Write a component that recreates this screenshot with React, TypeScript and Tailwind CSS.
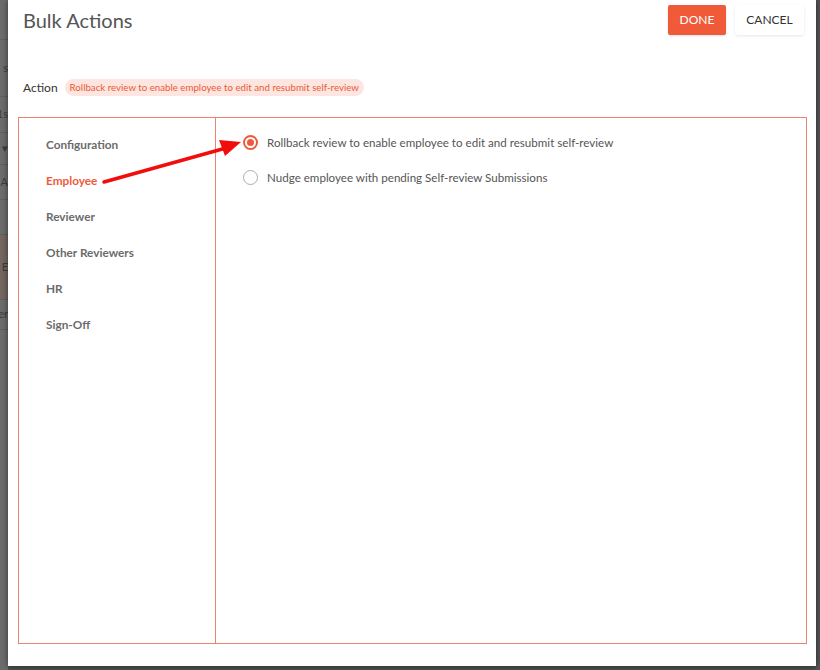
import { useState } from "react";

const NAV = ["Configuration", "Employee", "Reviewer", "Other Reviewers", "HR", "Sign-Off"];

const OPTIONS = [
  "Rollback review to enable employee to edit and resubmit self-review",
  "Nudge employee with pending Self-review Submissions",
];

// bits of the page peeking out behind the modal on the left
const BEHIND = [
  { h: 40, t: "" },
  { h: 57, t: "s" },
  { h: 36, t: "1s" },
  { h: 32, t: "▾" },
  { h: 35, t: "t A" },
  { h: 35, t: "" },
  { h: 65, t: "E", dark: true },
  { h: 30, t: "er" },
];

function Radio({ checked }: { checked: boolean }) {
  return checked ? (
    <span className="flex h-[15px] w-[15px] shrink-0 items-center justify-center rounded-full border-2 border-[#ef5a3a]">
      <span className="h-[7px] w-[7px] rounded-full bg-[#ef5a3a]" />
    </span>
  ) : (
    <span className="h-[15px] w-[15px] shrink-0 rounded-full border-[1.5px] border-[#a9adb1]" />
  );
}

export default function App() {
  const [active] = useState("Employee");
  const [selected, setSelected] = useState(0);

  return (
    <div className="relative flex h-[670px] w-[820px] overflow-hidden bg-[#4f4f4f] font-['Lato','Noto_Sans',sans-serif]">
      <div className="flex w-[8px] shrink-0 flex-col overflow-hidden bg-[#6c6c6c] text-[11px] text-[#3c3c3c]">
        {BEHIND.map((b, i) => (
          <div
            key={i}
            style={{ height: b.h }}
            className={`flex shrink-0 items-center justify-end whitespace-nowrap border-b border-[#5f5f5f] ${b.dark ? "bg-[#75675f]" : ""}`}
          >
            {b.t}
          </div>
        ))}
      </div>

      <div className="z-10 flex h-[666px] w-[808px] shrink-0 flex-col bg-white shadow-[0_0_6px_rgba(0,0,0,0.55)]">
        <div className="flex items-start justify-between pl-[15px] pr-[12px] pt-[5px]">
          <h1 className="text-[20px] leading-[30px] text-[#555]">Bulk Actions</h1>
          <div className="flex gap-[9px]">
            <button className="h-[30px] w-[58px] rounded-[2px] bg-[#f05a38] text-[12px] text-white shadow-sm">
              DONE
            </button>
            <button className="h-[30px] w-[69px] rounded-[3px] bg-white text-[12px] text-[#333] shadow-[0_1px_3px_rgba(0,0,0,0.1)]">
              CANCEL
            </button>
          </div>
        </div>

        <div className="ml-[15px] mt-[44px] flex h-[17px] items-center gap-[7px]">
          <span className="text-[12px] text-[#333]">Action</span>
          <span className="flex h-[17px] items-center rounded-full bg-[#fde6e1] px-[5px] text-[9.7px] text-[#ea5a34]">
            {OPTIONS[selected]}
          </span>
        </div>

        <div className="ml-[10px] mr-[9px] mt-[21px] flex h-[527px] border border-[#e8866c]">
          <div className="w-[197px] shrink-0 border-r border-[#e8866c] pl-[27px] pt-[9px]">
            {NAV.map((n) => (
              <div
                key={n}
                className={`h-[36px] text-[11.8px] font-bold leading-[36px] ${n === active ? "text-[#ef5a3a]" : "text-[#6b6b6b]"}`}
              >
                {n}
              </div>
            ))}
          </div>
          <div className="flex-1 pl-[27px] pt-[7px]">
            {OPTIONS.map((o, i) => (
              <label
                key={o}
                onClick={() => setSelected(i)}
                className="flex h-[35px] cursor-pointer items-center gap-[9px] text-[11.6px] text-[#555]"
              >
                <Radio checked={selected === i} />
                {o}
              </label>
            ))}
          </div>
        </div>
      </div>

      <div className="w-[4px] shrink-0 bg-[#555]" />

      {/* annotation arrow drawn over the screenshot */}
      <svg className="pointer-events-none absolute left-0 top-0 z-20" width="820" height="670">
        <line x1="104" y1="182" x2="226" y2="148" stroke="#f20d0d" strokeWidth="3.5" strokeLinecap="round" />
        <polygon points="241,142 219,140 225,156" fill="#f20d0d" />
      </svg>
    </div>
  );
}
